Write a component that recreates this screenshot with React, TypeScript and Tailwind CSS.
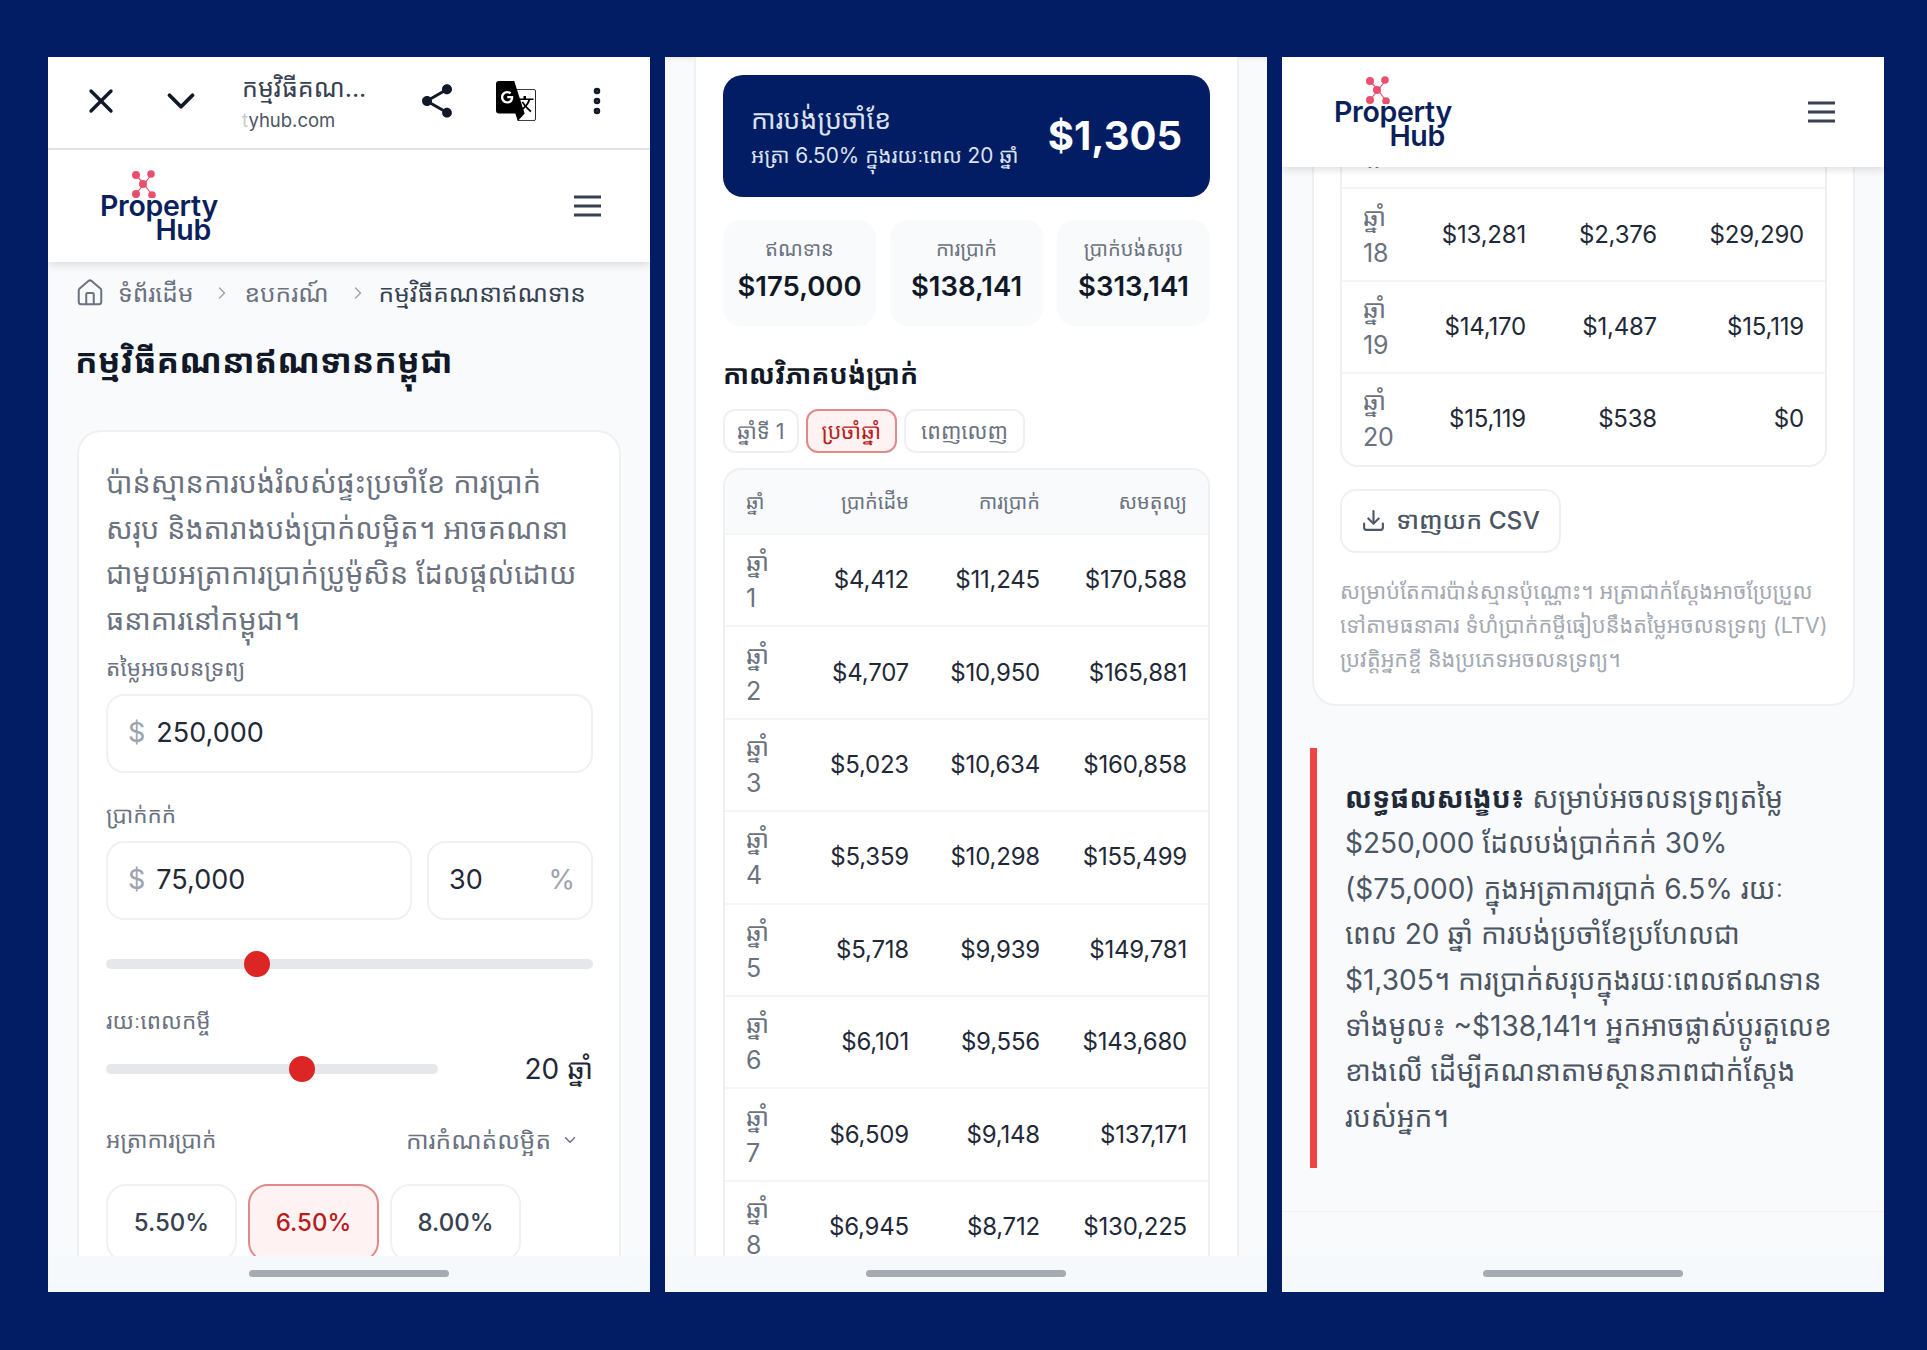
import { ChevronDown, ChevronRight, Download, EllipsisVertical, House, X } from 'lucide-react';
import { MdShare } from 'react-icons/md';
import { SiGoogletranslate } from 'react-icons/si';

const rows = [
    ['1', '$4,412', '$11,245', '$170,588'],
    ['2', '$4,707', '$10,950', '$165,881'],
    ['3', '$5,023', '$10,634', '$160,858'],
    ['4', '$5,359', '$10,298', '$155,499'],
    ['5', '$5,718', '$9,939', '$149,781'],
    ['6', '$6,101', '$9,556', '$143,680'],
    ['7', '$6,509', '$9,148', '$137,171'],
    ['8', '$6,945', '$8,712', '$130,225'],
];

const lastRows = [
    ['17', '$12,447', '$3,210', '$42,571'],
    ['18', '$13,281', '$2,376', '$29,290'],
    ['19', '$14,170', '$1,487', '$15,119'],
    ['20', '$15,119', '$538', '$0'],
];

function Logo() {
    return (
        <div className="flex w-[119px] flex-col items-end">
            <svg width="26" height="28" viewBox="0 0 26 28" className="mr-[62px]">
                <path d="M5 5 L13 14 L21 4 M13 14 L5 24 M13 14 L21 25" stroke="#e8506e" strokeWidth="1.2" fill="none" />
                <circle cx="5" cy="5" r="4" fill="#e8506e" />
                <circle cx="20" cy="4" r="3.8" fill="#e8506e" />
                <circle cx="12" cy="14" r="4" fill="#e8506e" />
                <circle cx="5" cy="24" r="4" fill="#e8506e" />
                <circle cx="21" cy="25" r="3.8" fill="#e8506e" />
            </svg>
            <div className="-mt-[4px] w-full text-[28.5px] leading-[24px] font-semibold tracking-[-0.3px] text-[#0a1f5c]">Property</div>
            <div className="pr-[8px] text-[28.5px] leading-[24px] font-semibold tracking-[-0.3px] text-[#0a1f5c]">Hub</div>
        </div>
    );
}

function HamburgerIcon() {
    return (
        <svg width="27" height="22" viewBox="0 0 27 22" className="text-[#374151]">
            <path d="M0 2 H27 M0 11 H27 M0 20 H27" stroke="currentColor" strokeWidth="3" fill="none" />
        </svg>
    );
}

function SiteHeader({ className }: { className: string }) {
    return (
        <header className={`relative z-10 flex items-center justify-between bg-white pl-[52px] pr-[49px] shadow-[0_3px_8px_rgba(0,0,0,0.12)] ${className}`}>
            <Logo />
            <HamburgerIcon />
        </header>
    );
}

function HomeBar() {
    return (
        <div className="relative z-10 flex h-[36px] shrink-0 items-center justify-center bg-[#f5f9fc]">
            <div className="-mt-[2px] h-[7px] w-[200px] rounded-full bg-[#a5abb0]"></div>
        </div>
    );
}

function Label({ children, className = '' }: { children: React.ReactNode; className?: string }) {
    return <div className={`text-[22.5px] leading-[30px] text-[#6b7280] ${className}`}>{children}</div>;
}

function Field({ prefix, value, suffix, className = '' }: { prefix?: string; value: string; suffix?: string; className?: string }) {
    return (
        <div className={`flex h-[79px] items-center rounded-[18px] border-2 border-[#f0f1f3] bg-white pl-[20px] pr-[16px] text-[27px] text-[#1f2937] ${className}`}>
            {prefix && <span className="mr-[11px] text-[#9ca3af]">{prefix}</span>}
            <span className="flex-1">{value}</span>
            {suffix && <span className="text-[#9ca3af]">{suffix}</span>}
        </div>
    );
}

function Slider({ percent, className = '' }: { percent: number; className?: string }) {
    return (
        <div className={`relative h-[10px] rounded-full bg-[#e5e7eb] ${className}`}>
            <div
                className="absolute top-1/2 h-[26px] w-[26px] -translate-x-1/2 -translate-y-1/2 rounded-full bg-[#dc2626]"
                style={{ left: `${percent}%` }}
            ></div>
        </div>
    );
}

function Chip({ children, active }: { children: React.ReactNode; active?: boolean }) {
    return (
        <div
            className={`flex h-[78px] w-[131px] items-center justify-center rounded-[20px] border-2 text-[24px] font-medium ${
                active ? 'border-[#e08a8a] bg-[#fef2f2] text-[#b91c1c]' : 'border-[#f0f1f3] bg-white text-[#374151]'
            }`}
        >
            {children}
        </div>
    );
}

function BrowserBar() {
    return (
        <div className="flex h-[93px] shrink-0 items-center border-b-2 border-[#e5e7eb] bg-white pb-[3px] pl-[33px] text-[#111827]">
            <X size={40} strokeWidth={2} />
            <ChevronDown size={46} strokeWidth={2} className="ml-[37px]" />
            <div className="ml-[38px] w-[150px] pt-[2px]">
                <div className="-mt-[2px] text-[25px] leading-[36px] text-[#374151]">កម្មវិធីគណ...</div>
                <div className="mt-[1px] text-[18.5px] leading-[26px] text-[#4b5563]"><span className="text-[#c6cacf]">t</span>yhub.com</div>
            </div>
            <MdShare size={40} className="ml-[25px]" />
            <SiGoogletranslate size={40} className="ml-[39px] text-black" />
            <EllipsisVertical size={34} strokeWidth={2.6} className="ml-[44px]" />
        </div>
    );
}

function Breadcrumb() {
    return (
        <div className="-ml-[3px] flex items-center text-[24.5px] leading-[32px] text-[#6b7280]">
            <House size={30} strokeWidth={1.6} className="mr-[13px]" />
            <span>ទំព័រដើម</span>
            <ChevronRight size={20} strokeWidth={1.6} className="ml-[19px] mr-[12px] text-[#9ca3af]" />
            <span>ឧបករណ៍</span>
            <ChevronRight size={20} strokeWidth={1.6} className="ml-[19px] mr-[11px] text-[#9ca3af]" />
            <span className="text-[#374151]">កម្មវិធីគណនាឥណទាន</span>
        </div>
    );
}

function CalculatorPhone() {
    return (
        <section className="flex h-[1235px] w-[602px] flex-col overflow-hidden bg-[#f8fafc]">
            <BrowserBar />
            <SiteHeader className="h-[112px] shrink-0" />
            <main className="min-h-0 flex-1 overflow-hidden pl-[29px] pr-[29px] pt-[15px]">
                <div className="pl-[1px]">
                    <Breadcrumb />
                </div>
                <h1 className="-ml-[2px] mt-[27px] text-[33.3px] leading-[50px] font-bold text-[#111827]">កម្មវិធីគណនាឥណទានកម្ពុជា</h1>
                <div className="mt-[44px] rounded-t-[24px] border-2 border-[#eef0f3] bg-white pl-[27px] pr-[26px] pt-[28px] pb-[40px]">
                    <p className="text-[28.7px] leading-[45.7px] text-[#6b7280]">
                        ប៉ាន់ស្មានការបង់រំលស់ផ្ទះប្រចាំខែ ការប្រាក់<br />
                        សរុប និងតារាងបង់ប្រាក់លម្អិត។ អាចគណនា<br />
                        ជាមួយអត្រាការប្រាក់ប្រូម៉ូសិន ដែលផ្តល់ដោយ<br />
                        ធនាគារនៅកម្ពុជា។
                    </p>
                    <Label className="mt-[10px]">តម្លៃអចលនទ្រព្យ</Label>
                    <Field prefix="$" value="250,000" className="mt-[11px]" />
                    <Label className="mt-[27px]">ប្រាក់កក់</Label>
                    <div className="mt-[11px] flex gap-[15px]">
                        <Field prefix="$" value="75,000" className="flex-1" />
                        <Field value="30" suffix="%" className="w-[166px]" />
                    </div>
                    <Slider percent={31} className="mt-[39px]" />
                    <Label className="mt-[37px]">រយៈពេលកម្ចី</Label>
                    <div className="mt-[14px] flex items-center justify-between">
                        <Slider percent={59} className="w-[332px]" />
                        <span className="text-[28px] leading-[38px] text-[#1f2937]">20 ឆ្នាំ</span>
                    </div>
                    <div className="mt-[37px] flex items-center justify-between pr-[14px]">
                        <Label>អត្រាការប្រាក់</Label>
                        <div className="flex items-center gap-[10px] text-[#6b7280]">
                            <Label className="text-[24.5px]">ការកំណត់លម្អិត</Label>
                            <ChevronDown size={18} strokeWidth={2} />
                        </div>
                    </div>
                    <div className="mt-[29px] flex gap-[11px]">
                        <Chip>5.50%</Chip>
                        <Chip active>6.50%</Chip>
                        <Chip>8.00%</Chip>
                    </div>
                </div>
            </main>
            <HomeBar />
        </section>
    );
}

function ScheduleTable({ data, header }: { data: string[][]; header?: boolean }) {
    return (
        <div className="overflow-hidden rounded-[18px] border-2 border-[#eef0f3] bg-white">
            {header && (
                <div className="grid h-[63px] grid-cols-[60px_103px_131px_147px] items-center bg-[#f8fafc] px-[21px] text-[20px] text-[#6b7280]">
                    <span>ឆ្នាំ</span>
                    <span className="text-right">ប្រាក់ដើម</span>
                    <span className="text-right">ការប្រាក់</span>
                    <span className="text-right">សមតុល្យ</span>
                </div>
            )}
            {data.map((row, i) => (
                <div
                    key={row[0]}
                    className={`grid h-[92.4px] grid-cols-[60px_103px_131px_147px] items-center px-[21px] text-[24px] tracking-[-0.2px] text-[#1f2937] ${
                        i > 0 || header ? 'border-t-2 border-[#f4f5f7]' : ''
                    }`}
                >
                    <div className="flex flex-col text-[25px] leading-[36px] text-[#6b7280]">
                        <span>ឆ្នាំ</span>
                        <span>{row[0]}</span>
                    </div>
                    <span className="text-right">{row[1]}</span>
                    <span className="text-right">{row[2]}</span>
                    <span className="text-right">{row[3]}</span>
                </div>
            ))}
        </div>
    );
}

function Stat({ label, value }: { label: string; value: string }) {
    return (
        <div className="flex flex-col items-center justify-center rounded-[18px] bg-[#f8fafc] pb-[8px]">
            <span className="text-[20px] leading-[34px] text-[#6b7280]">{label}</span>
            <span className="text-[27.5px] leading-[40px] font-semibold text-[#111827]">{value}</span>
        </div>
    );
}

function Tab({ children, active, className = 'px-[12px]' }: { children: React.ReactNode; active?: boolean; className?: string }) {
    return (
        <div
            className={`flex h-[44px] items-center rounded-[12px] border-2 text-[21.5px] ${className} ${
                active ? 'border-[#e08a8a] bg-[#fef2f2] text-[#b91c1c]' : 'border-[#eef0f3] bg-white text-[#6b7280]'
            }`}
        >
            {children}
        </div>
    );
}

function SchedulePhone() {
    return (
        <section className="flex h-[1235px] w-[602px] flex-col overflow-hidden bg-[#f8fafc]">
            <main className="min-h-0 flex-1 overflow-hidden pl-[29px] pr-[28px] shadow-[inset_0_6px_6px_-6px_rgba(0,0,0,0.12)]">
                <div className="border-x-2 border-[#eef0f3] bg-white px-[27px] pt-[18px]">
                    <div className="flex h-[122px] items-center justify-between rounded-[20px] bg-[#021d63] px-[28px] text-white">
                        <div>
                            <div className="text-[26.7px] leading-[40px] text-[#dbe2f0]">ការបង់ប្រចាំខែ</div>
                            <div className="text-[20.8px] leading-[34px] text-[#dbe2f0]">អត្រា 6.50% ក្នុងរយៈពេល 20 ឆ្នាំ</div>
                        </div>
                        <div className="text-[40px] font-bold">$1,305</div>
                    </div>
                    <div className="mt-[23px] grid h-[106px] grid-cols-3 gap-[14px]">
                        <Stat label="ឥណទាន" value="$175,000" />
                        <Stat label="ការប្រាក់" value="$138,141" />
                        <Stat label="ប្រាក់បង់សរុប" value="$313,141" />
                    </div>
                    <h2 className="mt-[26px] text-[26.8px] leading-[44px] font-bold text-[#111827]">កាលវិភាគបង់ប្រាក់</h2>
                    <div className="mt-[13px] flex gap-[7px]">
                        <Tab>ឆ្នាំទី 1</Tab>
                        <Tab active className="px-[14px]">ប្រចាំឆ្នាំ</Tab>
                        <Tab className="px-[15px]">ពេញលេញ</Tab>
                    </div>
                    <div className="mt-[15px]">
                        <ScheduleTable data={rows} header />
                    </div>
                </div>
            </main>
            <HomeBar />
        </section>
    );
}

function SummaryPhone() {
    return (
        <section className="flex h-[1235px] w-[602px] flex-col overflow-hidden bg-[#f8fafc]">
            <SiteHeader className="h-[110px] shrink-0" />
            <main className="min-h-0 flex-1 overflow-hidden">
                <div className="-mt-[74px] pl-[30px] pr-[29px]">
                    <div className="rounded-b-[24px] border-x-2 border-b-2 border-[#eef0f3] bg-white px-[26px] pb-[28px]">
                        <ScheduleTable data={lastRows} />
                        <button className="mt-[22px] flex h-[64px] w-[221px] items-center justify-center gap-[10px] rounded-[16px] border-2 border-[#eef0f3] bg-white text-[24.5px] font-medium text-[#4b5563]">
                            <Download size={25} strokeWidth={2} />
                            <span>ទាញយក CSV</span>
                        </button>
                        <p className="mt-[21px] whitespace-nowrap text-[21.6px] leading-[34px] text-[#a3a9b2]">
                            សម្រាប់តែការប៉ាន់ស្មានប៉ុណ្ណោះ។ អត្រាជាក់ស្តែងអាចប្រែប្រួល<br />
                            ទៅតាមធនាគារ ទំហំប្រាក់កម្ចីធៀបនឹងតម្លៃអចលនទ្រព្យ (LTV)<br />
                            ប្រវត្តិអ្នកខ្ចី និងប្រភេទអចលនទ្រព្យ។
                        </p>
                    </div>
                </div>
                <div className="ml-[28px] mt-[42px] h-[420px] border-l-[7px] border-[#ef4444] pl-[28px] pr-[20px] pt-[28px]">
                    <p className="text-[28px] leading-[45.6px] text-[#4b5563]">
                        <strong className="font-bold text-[#1f2937]">លទ្ធផលសង្ខេប៖</strong> សម្រាប់អចលនទ្រព្យតម្លៃ<br />
                        $250,000 ដែលបង់ប្រាក់កក់ 30%<br />
                        ($75,000) ក្នុងអត្រាការប្រាក់ 6.5% រយៈ<br />
                        ពេល 20 ឆ្នាំ ការបង់ប្រចាំខែប្រហែលជា<br />
                        $1,305។ ការប្រាក់សរុបក្នុងរយៈពេលឥណទាន<br />
                        ទាំងមូល៖ ~$138,141។ អ្នកអាចផ្លាស់ប្តូរតួលេខ<br />
                        ខាងលើ ដើម្បីគណនាតាមស្ថានភាពជាក់ស្តែង<br />
                        របស់អ្នក។
                    </p>
                </div>
                <div className="mt-[43px] border-t border-[#f0f1f3]"></div>
            </main>
            <HomeBar />
        </section>
    );
}

export default function App() {
    return (
        <div className="flex h-[1350px] gap-[15px] bg-[#021d63] pl-[48px] pt-[57px] font-['Inter','Noto_Sans_Khmer','Noto_Sans','DejaVu_Sans',sans-serif]">
            <CalculatorPhone />
            <SchedulePhone />
            <SummaryPhone />
        </div>
    );
}
